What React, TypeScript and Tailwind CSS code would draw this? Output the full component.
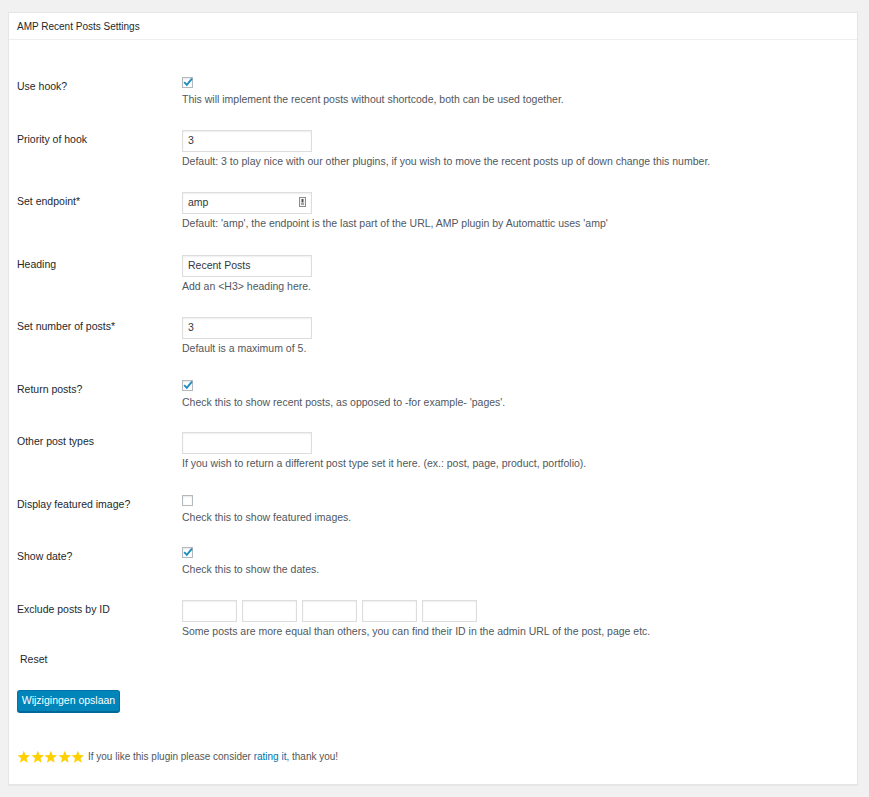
import React from 'react';

const font = { fontFamily: '"Liberation Sans", Arial, sans-serif' };

function Checkbox({ checked }: { checked?: boolean }) {
  return (
    <div className="relative h-[11px] w-[11px] border border-[#b4b9be] bg-white shadow-[inset_0_1px_2px_rgba(0,0,0,0.1)]">
      {checked && (
        <svg viewBox="0 0 12 12" className="absolute -left-[1px] -top-[2px] h-[12px] w-[12px]">
          <path d="M2.2 6.2 L4.8 8.8 L10 2.6" fill="none" stroke="#1e8cbe" strokeWidth="1.9" />
        </svg>
      )}
    </div>
  );
}

function TextInput({ value, width = 'w-[130px]', icon }: { value?: string; width?: string; icon?: boolean }) {
  return (
    <div
      className={`relative flex h-[22px] ${width} items-center border border-[#ddd] bg-white px-[5px] text-[10.5px] text-[#32373c] shadow-[inset_0_1px_2px_rgba(0,0,0,0.07)]`}
    >
      {value}
      {icon && (
        <svg viewBox="0 0 7 10" className="absolute right-[5px] top-[4px] h-[10px] w-[7px]">
          <rect x="0.5" y="0.5" width="6" height="9" fill="#f4f4f4" stroke="#8c8c8c" />
          <rect x="2.5" y="2" width="2" height="3.5" fill="#555" />
          <rect x="2" y="6.5" width="3" height="1" fill="#555" />
        </svg>
      )}
    </div>
  );
}

function Row({
  label,
  kind,
  children,
  desc,
}: {
  label: string;
  kind: 'check' | 'input';
  children: React.ReactNode;
  desc: string;
}) {
  return (
    <div className={`flex ${kind === 'check' ? 'h-[52.5px]' : 'h-[62.5px]'}`}>
      <div className="w-[165px] shrink-0 pt-[14px] text-[10.5px] leading-[14px] text-[#23282d]">{label}</div>
      <div className="pt-[12px]">
        {children}
        <p className={`${kind === 'check' ? 'mt-[4px]' : 'mt-[2px]'} text-[10.5px] leading-[14px] text-[#50575e]`}>{desc}</p>
      </div>
    </div>
  );
}

function Star() {
  return (
    <svg viewBox="0 0 24 24" className="h-[14px] w-[13.6px]">
      <path
        d="M12 1 L14.9 8.4 L23 8.9 L16.8 14 L18.8 22 L12 17.6 L5.2 22 L7.2 14 L1 8.9 L9.1 8.4 Z"
        fill="#ffd000"
      />
    </svg>
  );
}

export default function App() {
  return (
    <div className="min-h-screen bg-[#f1f1f1] pl-[8px] pt-[12px] pr-[11px] pb-[12px]" style={font}>
      <div className="h-[773px] w-[850px] border border-[#e5e5e5] bg-white shadow-[0_1px_1px_rgba(0,0,0,0.04)]">
        <div className="flex h-[27px] items-center border-b border-[#eee] px-[8px] text-[10px] text-[#23282d]">
          AMP Recent Posts Settings
        </div>
        <div className="px-[8px] pt-[25px]">
          <Row label="Use hook?" kind="check" desc="This will implement the recent posts without shortcode, both can be used together.">
            <Checkbox checked />
          </Row>
          <Row
            label="Priority of hook"
            kind="input"
            desc="Default: 3 to play nice with our other plugins, if you wish to move the recent posts up of down change this number."
          >
            <TextInput value="3" />
          </Row>
          <Row
            label="Set endpoint*"
            kind="input"
            desc="Default: 'amp', the endpoint is the last part of the URL, AMP plugin by Automattic uses 'amp'"
          >
            <TextInput value="amp" icon />
          </Row>
          <Row label="Heading" kind="input" desc="Add an <H3> heading here.">
            <TextInput value="Recent Posts" />
          </Row>
          <Row label="Set number of posts*" kind="input" desc="Default is a maximum of 5.">
            <TextInput value="3" />
          </Row>
          <Row label="Return posts?" kind="check" desc="Check this to show recent posts, as opposed to -for example- 'pages'.">
            <Checkbox checked />
          </Row>
          <Row
            label="Other post types"
            kind="input"
            desc="If you wish to return a different post type set it here. (ex.: post, page, product, portfolio)."
          >
            <TextInput />
          </Row>
          <Row label="Display featured image?" kind="check" desc="Check this to show featured images.">
            <Checkbox />
          </Row>
          <Row label="Show date?" kind="check" desc="Check this to show the dates.">
            <Checkbox checked />
          </Row>
          <Row
            label="Exclude posts by ID"
            kind="input"
            desc="Some posts are more equal than others, you can find their ID in the admin URL of the post, page etc."
          >
            <div className="flex gap-[5px]">
              <TextInput width="w-[55px]" />
              <TextInput width="w-[55px]" />
              <TextInput width="w-[55px]" />
              <TextInput width="w-[55px]" />
              <TextInput width="w-[55px]" />
            </div>
          </Row>
          <div className="pl-[3px] pt-[2px] text-[10.5px] leading-[14px] text-[#23282d]">Reset</div>
          <button className="mt-[24px] h-[22px] w-[103px] rounded-[3px] border border-[#0073aa] border-b-[#006799] bg-[#0085ba] text-[10.5px] text-white shadow-[0_1px_0_#006799]">
            Wijzigingen opslaan
          </button>
          <div className="mt-[37px] flex items-center gap-[3px] text-[10px] text-[#555]">
            <div className="flex">
              <Star />
              <Star />
              <Star />
              <Star />
              <Star />
            </div>
            <span>
              If you like this plugin please consider <span className="text-[#0073aa]">rating it</span>, thank you!
            </span>
          </div>
        </div>
      </div>
    </div>
  );
}
